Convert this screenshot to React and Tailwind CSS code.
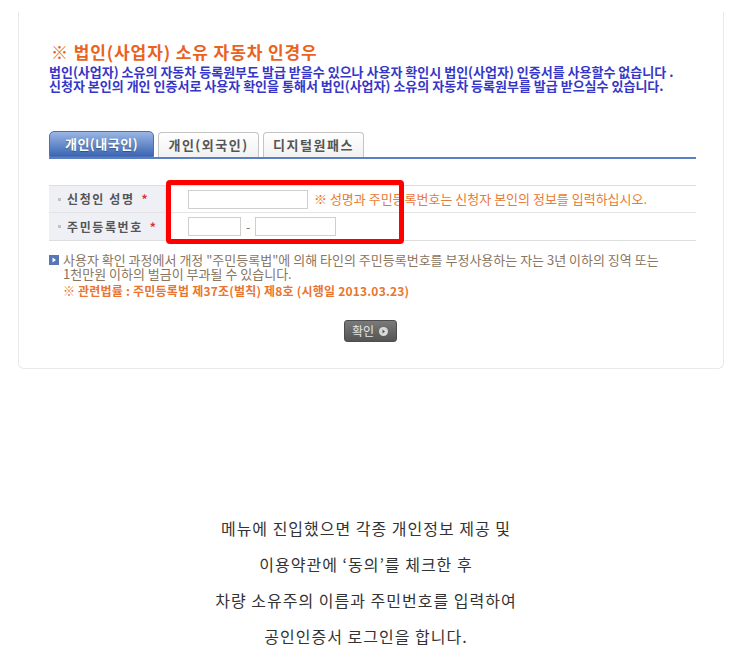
import React from "react";

const Tab = ({ label, active }) => {
  if (active) {
    return (
      <div className="w-[105px] h-[26px] flex items-center justify-center rounded-t-[5px] bg-linear-to-b from-[#9ab6e3] to-[#3c66b4] border border-[#4a6fb5] text-white text-[13px] font-bold tracking-[0.5px] [text-shadow:0_1px_1px_rgba(0,0,0,0.35)]">
        {label}
      </div>
    );
  }
  return (
    <div className="w-[101px] h-[25px] flex items-center justify-center rounded-t-[4px] bg-linear-to-b from-white to-[#f1f1f1] border border-b-0 border-[#c4c4c4] text-[#555] text-[13px] font-bold tracking-[1.5px]">
      {label}
    </div>
  );
};

const Label = ({ children }) => (
  <div className="w-[117px] bg-[#eef0f6] border-r border-[#e2e2e2] flex items-center pl-[9px] text-[12px] font-bold text-[#555]">
    <span className="w-[3px] h-[3px] bg-[#c2c2c2] mr-[6px]" />
    <span className="tracking-[1.6px]">{children}</span>
    <span className="text-[#e0302a] ml-[7px]">*</span>
  </div>
);

export default function App() {
  return (
    <div className="w-[746px] h-[669px] bg-white font-['Noto_Sans_CJK_KR',sans-serif] overflow-hidden">
      {/* 상단 캡처 패널 */}
      <div className="mt-[12px] ml-[18px] w-[706px] h-[357px] border-l border-r border-b border-[#e9e9e9] rounded-b-[6px]">
        <div className="pl-[32px] pt-[30px]">
          <div className="text-[17px] leading-[20px] font-bold text-[#ea621d] tracking-[0.9px]">
            ※ 법인(사업자) 소유 자동차 인경우
          </div>
          <div className="mt-[3px] text-[13px] leading-[14px] font-bold text-[#3636c8] -ml-[2px]">
            <p>법인(사업자) 소유의 자동차 등록원부도 발급 받을수 있으나 사용자 확인시 법인(사업자) 인증서를 사용할수 없습니다 .</p>
            <p>신청자 본인의 개인 인증서로 사용자 확인을 통해서 법인(사업자) 소유의 자동차 등록원부를 발급 받으실수 있습니다.</p>
          </div>
        </div>

        <div className="ml-[30px] w-[647px]">
          {/* 탭 */}
          <div className="mt-[38px] flex items-end gap-[4px] h-[26px]">
            <Tab label="개인(내국인)" active />
            <Tab label="개인(외국인)" />
            <Tab label="디지털원패스" />
          </div>
          <div className="h-[2px] bg-[#5a7fc3]" />

          {/* 입력 폼 */}
          <div className="relative mt-[26px] border-t border-b border-[#dedede]">
            <div className="flex h-[27px] border-b border-[#e4e4e4]">
              <Label>신청인 성명</Label>
              <div className="flex items-center pl-[22px]">
                <div className="w-[120px] h-[19px] border border-[#cfcfcf] bg-white" />
                <span className="ml-[6px] text-[13px] text-[#ea7a34]">※ 성명과 주민등록번호는 신청자 본인의 정보를 입력하십시오.</span>
              </div>
            </div>
            <div className="flex h-[27px]">
              <Label>주민등록번호</Label>
              <div className="flex items-center pl-[22px]">
                <div className="w-[53px] h-[19px] border border-[#cfcfcf] bg-white" />
                <span className="mx-[5px] text-[12px] text-[#666]">-</span>
                <div className="w-[81px] h-[19px] border border-[#cfcfcf] bg-white" />
              </div>
            </div>
            {/* 빨간 강조 박스 */}
            <div className="absolute left-[117px] top-[-6px] w-[238px] h-[64px] border-[5px] border-[#ff0000] rounded-[4px]" />
          </div>

          {/* 안내문 */}
          <div className="mt-[12px] text-[13px] leading-[14px] text-[#8a7560]">
            <div className="flex">
              <span className="mt-[2px] w-[10px] h-[10px] bg-[#5577b8] flex items-center justify-center mr-[4px] shrink-0">
                <svg width="6" height="6" viewBox="0 0 6 6"><path d="M1.5 0.5 L5 3 L1.5 5.5 Z" fill="#fff" /></svg>
              </span>
              <div>
                <p>사용자 확인 과정에서 개정 "주민등록법"에 의해 타인의 주민등록번호를 부정사용하는 자는 3년 이하의 징역 또는</p>
                <p>1천만원 이하의 벌금이 부과될 수 있습니다.</p>
                <p className="mt-[3px] text-[12px] text-[#ea7430] font-bold tracking-[0.2px]">※ 관련법률 : 주민등록법 제37조(벌칙) 제8호 (시행일 2013.03.23)</p>
              </div>
            </div>
          </div>

          {/* 확인 버튼 */}
          <div className="mt-[22px] flex justify-center pr-[5px]">
            <div className="w-[53px] h-[22px] rounded-[3px] bg-linear-to-b from-[#7a7a7a] to-[#555] border border-[#4d4d4d] flex items-center justify-center gap-[5px] text-[12px] text-[#e6e6e6]">
              <span>확인</span>
              <svg width="9" height="9" viewBox="0 0 9 9">
                <circle cx="4.5" cy="4.5" r="4.5" fill="#d9d9d9" />
                <path d="M3.5 2.5 L6 4.5 L3.5 6.5 Z" fill="#555" />
              </svg>
            </div>
          </div>
        </div>
      </div>

      {/* 설명 문구 */}
      <div className="mt-[141px] pr-[14px] text-center text-[16px] leading-[36px] tracking-[1px] text-[#333]">
        <p>메뉴에 진입했으면 각종 개인정보 제공 및</p>
        <p>이용약관에 ‘동의’를 체크한 후</p>
        <p>차량 소유주의 이름과 주민번호를 입력하여</p>
        <p>공인인증서 로그인을 합니다.</p>
      </div>
    </div>
  );
}
